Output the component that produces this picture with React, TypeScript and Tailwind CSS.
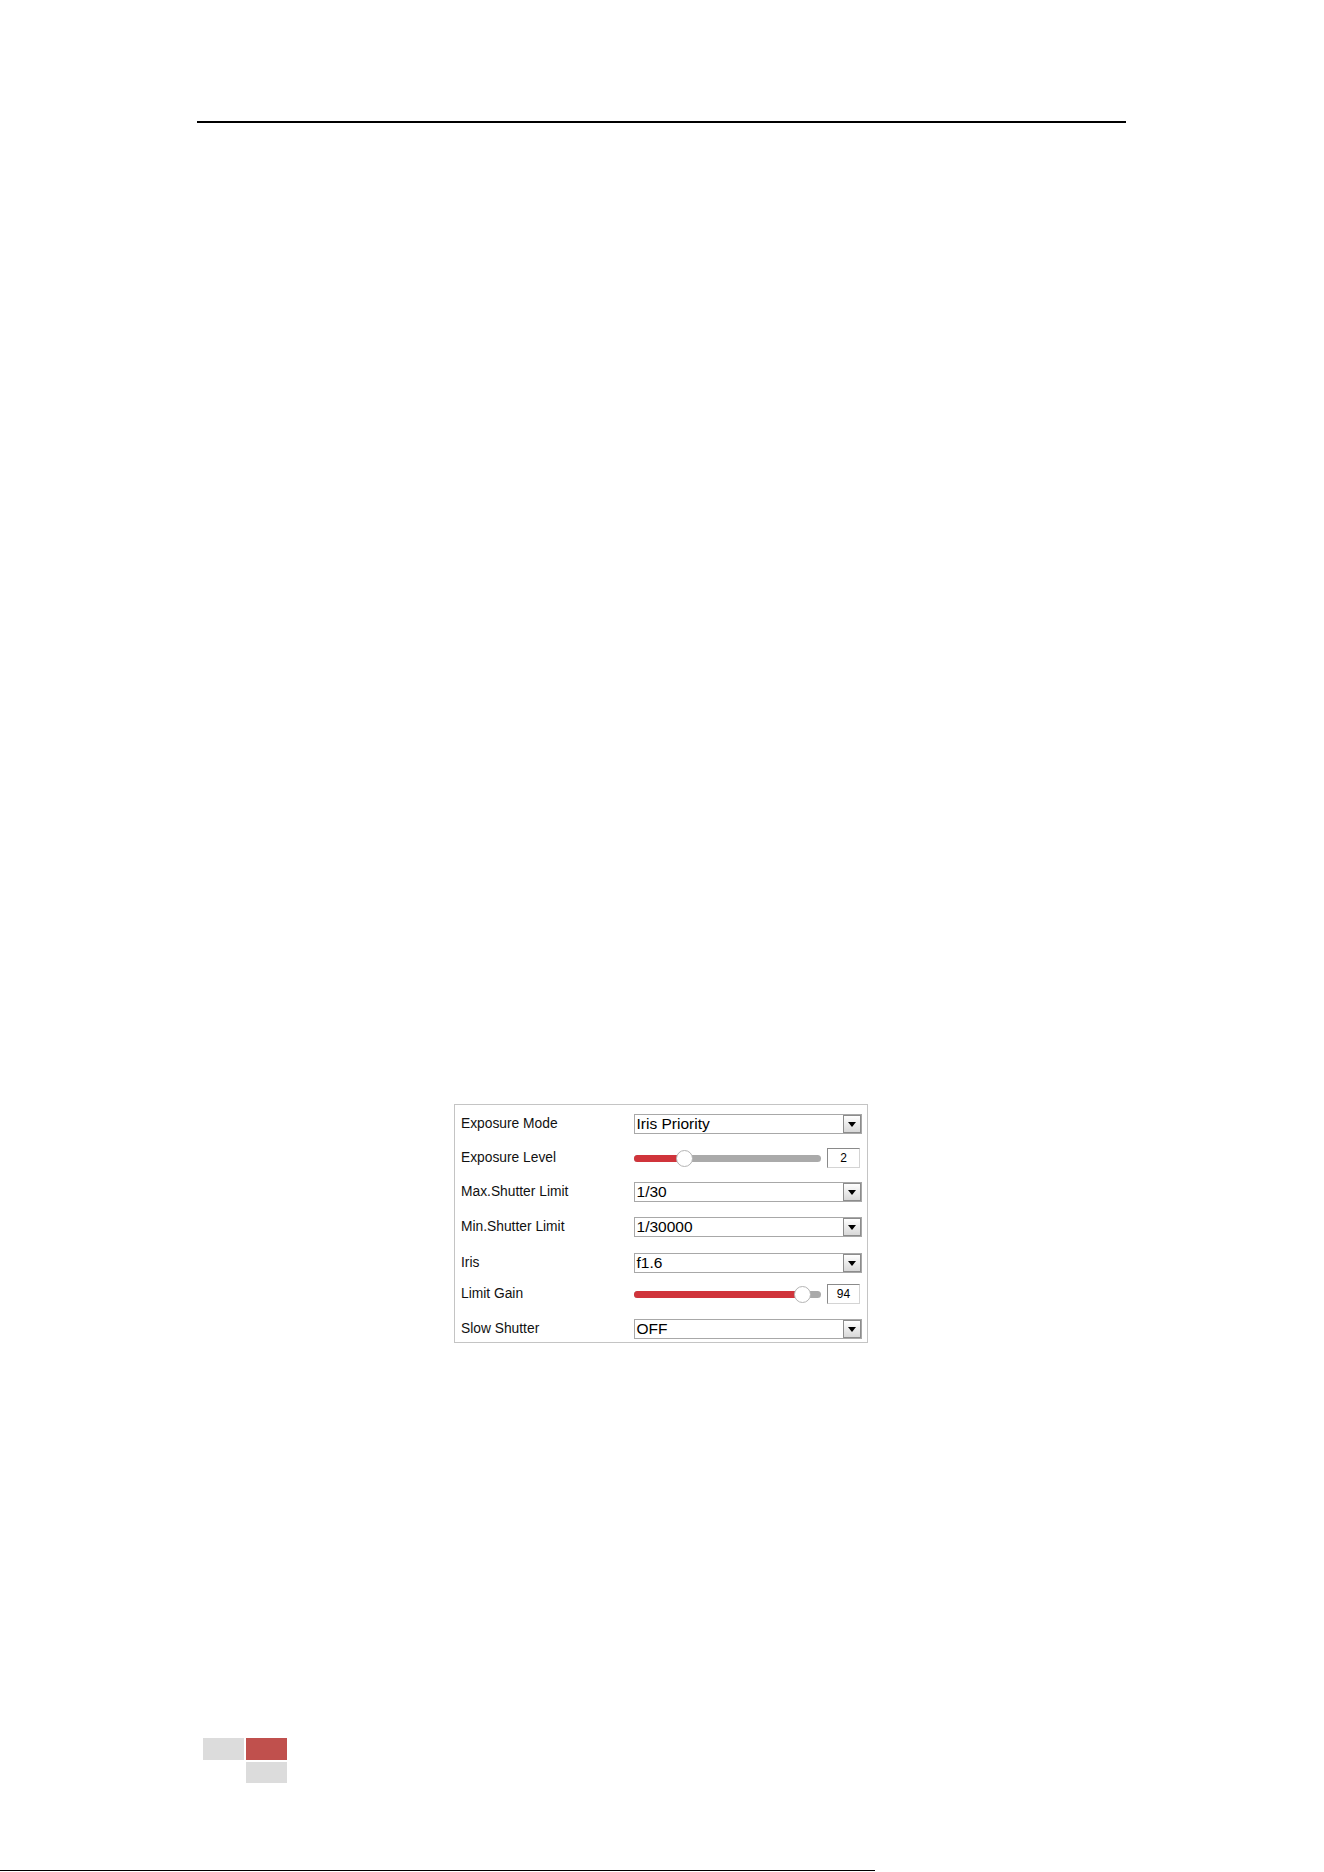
import { ReactNode } from "react"

const SelectBox = ({ value }: { value: string }) => (
  <div className="flex h-[20px] w-[229px] items-center border border-[#a8a8a8] bg-white">
    <span className="flex-1 pl-[2px] text-[15.5px] leading-none text-black">{value}</span>
    <div className="flex h-[18px] w-[18px] items-center justify-center border border-[#8c8c8c] bg-gradient-to-b from-[#ffffff] to-[#d8d8d8]">
      <div className="h-0 w-0 border-x-[4px] border-t-[5px] border-x-transparent border-t-black" />
    </div>
  </div>
)

const Slider = ({ value, max }: { value: number; max: number }) => {
  // thumb centre runs from 8px to 179px along the 187px track
  const pos = 8 + (value / max) * 171
  return (
    <div className="flex items-center gap-[6px]">
      <div className="relative h-[17px] w-[187px]">
        <div className="absolute left-0 right-0 top-[5px] h-[7px] rounded-full bg-[#aaaaaa]" />
        <div className="absolute left-0 top-[5px] h-[7px] rounded-full bg-[#d0343b]" style={{ width: pos }} />
        <div
          className="absolute top-0 h-[17px] w-[17px] rounded-full border border-[#b4b4b4] bg-white"
          style={{ left: pos - 8.5 }}
        />
      </div>
      <div className="flex h-[20px] w-[33px] items-center justify-center border border-[#8a8a8a] border-b-[#d4d4d4] border-r-[#d4d4d4] bg-white text-[12px] text-black">
        {value}
      </div>
    </div>
  )
}

const Row = ({ label, mt, children }: { label: string; mt: string; children: ReactNode }) => (
  <div className={`flex h-[20px] items-center ${mt}`}>
    <span className="w-[173px] text-[13.8px] text-[#111111]">{label}</span>
    {children}
  </div>
)

const App = () => {
  return (
    <div className="flex h-[1872px] w-[1324px] flex-col bg-white font-['Liberation_Sans',Arial,sans-serif]">
      <div className="ml-[197px] mt-[121px] h-[2px] w-[929px] bg-black" />

      <div className="mt-[981px] ml-[454px] w-[414px] border border-[#c4c4c4] pb-[3px] pl-[6px] pr-[5px] pt-[9px]">
        <Row label="Exposure Mode" mt="mt-0">
          <SelectBox value="Iris Priority" />
        </Row>
        <Row label="Exposure Level" mt="mt-[14px]">
          <Slider value={2} max={8} />
        </Row>
        <Row label="Max.Shutter Limit" mt="mt-[14px]">
          <SelectBox value="1/30" />
        </Row>
        <Row label="Min.Shutter Limit" mt="mt-[15px]">
          <SelectBox value="1/30000" />
        </Row>
        <Row label="Iris" mt="mt-[16px]">
          <SelectBox value="f1.6" />
        </Row>
        <Row label="Limit Gain" mt="mt-[11px]">
          <Slider value={94} max={100} />
        </Row>
        <Row label="Slow Shutter" mt="mt-[15px]">
          <SelectBox value="OFF" />
        </Row>
      </div>

      <div className="ml-[203px] mt-[395px] grid w-[84px] grid-cols-2 gap-x-[2px] gap-y-[2px]">
        <div className="h-[22px] bg-[#dcdcdc]" />
        <div className="h-[22px] bg-[#c0504d]" />
        <div />
        <div className="h-[21px] bg-[#dcdcdc]" />
      </div>

      <div className="mt-auto mb-[1px] h-[1px] w-[875px] bg-black" />
    </div>
  )
}

export default App
